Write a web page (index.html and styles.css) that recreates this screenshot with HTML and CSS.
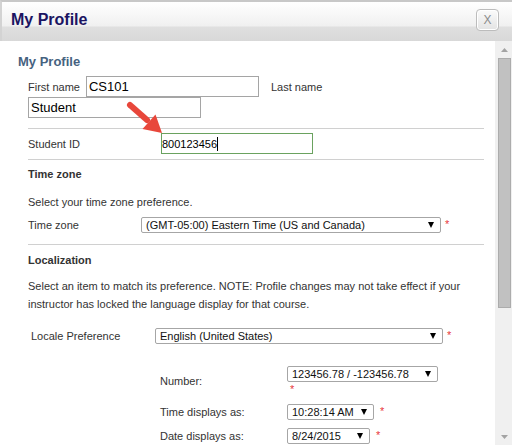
FILE: index.html
```html
<!DOCTYPE html>
<html lang="en">
<head>
<meta charset="utf-8">
<title>My Profile</title>
<link rel="stylesheet" href="styles.css">
</head>
<body>
<div class="dialog">
  <header class="dlg-head">
    <h1 class="dlg-title">My Profile</h1>
    <button class="dlg-close" type="button">X</button>
  </header>

  <div class="dlg-body">
    <main class="pane">
      <h2 class="page-title">My Profile</h2>

      <div class="names">
        <label class="lbl lbl-first">First name</label>
        <input class="txt" type="text" value="CS101">
        <label class="lbl lbl-last">Last name</label>
        <input class="txt" type="text" value="Student">
      </div>

      <hr class="rule">

      <div class="row row-id">
        <label class="lbl lbl-id">Student ID</label>
        <div class="txt txt-focus"><span>800123456</span><span class="caret"></span></div>
      </div>

      <hr class="rule rule-b">

      <h3 class="sec">Time zone</h3>
      <p class="note">Select your time zone preference.</p>
      <div class="row row-tz">
        <label class="lbl lbl-tz">Time zone</label>
        <div class="sel sel-tz"><span>(GMT-05:00) Eastern Time (US and Canada)</span><svg viewBox="0 0 6 6"><polygon points="0,0 6,0 3,6"/></svg></div>
        <span class="req">*</span>
      </div>

      <hr class="rule rule-c">

      <h3 class="sec sec-loc">Localization</h3>
      <p class="note note-loc">Select an item to match its preference. NOTE: Profile changes may not take effect if your instructor has locked the language display for that course.</p>

      <div class="row row-locale">
        <label class="lbl lbl-locale">Locale Preference</label>
        <div class="sel sel-locale"><span>English (United States)</span><svg viewBox="0 0 6 6"><polygon points="0,0 6,0 3,6"/></svg></div>
        <span class="req">*</span>
      </div>

      <div class="formats">
        <label class="lbl">Number:</label>
        <div class="fmt fmt-stack">
          <div class="sel sel-num"><span>123456.78 / -123456.78</span><svg viewBox="0 0 6 6"><polygon points="0,0 6,0 3,6"/></svg></div>
          <span class="req req-under">*</span>
        </div>

        <label class="lbl">Time displays as:</label>
        <div class="fmt">
          <div class="sel sel-time"><span>10:28:14 AM</span><svg viewBox="0 0 6 6"><polygon points="0,0 6,0 3,6"/></svg></div>
          <span class="req req-side">*</span>
        </div>

        <label class="lbl">Date displays as:</label>
        <div class="fmt">
          <div class="sel sel-date"><span>8/24/2015</span><svg viewBox="0 0 6 6"><polygon points="0,0 6,0 3,6"/></svg></div>
          <span class="req req-side">*</span>
        </div>
      </div>
    </main>

    <div class="sb">
      <div class="sb-btn"><svg viewBox="0 0 7 4"><polygon points="3.5,0 7,4 0,4"/></svg></div>
      <div class="sb-thumb"></div>
      <div class="sb-btn sb-down"><svg viewBox="0 0 7 4"><polygon points="0,0 7,0 3.5,4"/></svg></div>
    </div>
  </div>

  <svg class="callout" viewBox="124 98 44 40">
    <line x1="130" y1="105" x2="147" y2="120" stroke="#e8473b" stroke-width="6" stroke-linecap="round"/>
    <polygon points="162,133 155.5,114.5 142.5,129" fill="#e8473b"/>
  </svg>
</div>
</body>
</html>
```

FILE: styles.css
```css
* { box-sizing: border-box; }

html, body { margin: 0; padding: 0; }

body {
  width: 512px;
  height: 445px;
  overflow: hidden;
  background: #fff;
  font-family: "Liberation Sans", Arial, sans-serif;
  font-size: 11px;
  color: #333;
}

.dialog {
  position: relative;
  width: 512px;
  height: 445px;
  display: flex;
  flex-direction: column;
  overflow: hidden;
}

/* title bar */
.dlg-head {
  flex: none;
  height: 41px;
  display: flex;
  justify-content: space-between;
  align-items: flex-start;
  border-top: 2px solid #c8c8c8;
  border-left: 2px solid #d3d3d3;
  background: linear-gradient(#ffffff 0, #f0f0f0 24px, #dfdfdf 25px, #d8d8d8 100%);
}

.dlg-title {
  margin: 0;
  padding: 8px 0 0 9px;
  font-size: 16px;
  line-height: 19px;
  font-weight: bold;
  color: #1b1462;
}

.dlg-close {
  margin: 7px 13px 0 0;
  width: 23px;
  height: 22px;
  padding: 0;
  border: 1px solid #bcbcbc;
  border-radius: 4px;
  background: linear-gradient(#fbfbfb, #e3e3e3);
  box-shadow: inset 0 0 0 1px #fff;
  font: 12px/20px "Liberation Sans", Arial, sans-serif;
  color: #8c8c8c;
}

/* body + scroll area */
.dlg-body {
  flex: 1;
  min-height: 0;
  display: flex;
}

.pane {
  flex: 1;
  min-width: 0;
  padding: 0 11px 0 28px;
  overflow: hidden;
}

.page-title {
  margin: 13px 0 0 -10px;
  font-size: 13px;
  line-height: 16px;
  font-weight: bold;
  color: #46627f;
}

.lbl { color: #333; line-height: 14px; }

/* name fields */
.names {
  margin-top: 6px;
  display: flex;
  flex-wrap: wrap;
  align-items: center;
}

.lbl-first { margin-right: 6px; }
.lbl-last { margin-left: 12px; }

.txt {
  width: 173px;
  height: 21px;
  margin: 0;
  padding: 0 2px;
  border: 1px solid #a5a5a5;
  border-radius: 0;
  background: #fff;
  font: 13px "Liberation Sans", Arial, sans-serif;
  color: #000;
  outline: none;
}

.rule {
  margin: 10px 0 0;
  height: 0;
  border: 0;
  border-top: 1px solid #d0d0d0;
}
.rule-b { margin-top: 5px; }
.rule-c { margin-top: 11px; }

.row {
  display: flex;
  align-items: center;
}

.row-id { margin-top: 4px; }
.lbl-id { width: 133px; }

.txt-focus {
  width: 152px;
  padding: 0;
  display: flex;
  align-items: center;
  border-color: #6aa25f;
  font-size: 11px;
}

.caret {
  width: 1px;
  height: 14px;
  background: #000;
}

.sec {
  margin: 7px 0 0;
  font-size: 11px;
  line-height: 14px;
  font-weight: bold;
  color: #333;
}
.sec-loc { margin-top: 8px; }

.note {
  margin: 14px 0 0;
  line-height: 14px;
  color: #333;
}
.note-loc {
  margin-top: 10px;
  line-height: 18px;
}

.row-tz { margin-top: 8px; }
.lbl-tz { width: 113px; }

/* select boxes */
.sel {
  flex: none;
  height: 16px;
  padding: 0 6px 0 4px;
  display: flex;
  align-items: center;
  justify-content: space-between;
  border: 1px solid #a6a6a6;
  border-radius: 2px;
  background: #fff;
  color: #111;
  line-height: 14px;
  white-space: nowrap;
}

.sel svg {
  flex: none;
  width: 6px;
  height: 6px;
  fill: #000;
}

.sel-tz { width: 300px; }
.sel-locale { width: 288px; }
.sel-num { width: 151px; }
.sel-time { width: 87px; }
.sel-date { width: 83px; }

.req {
  align-self: flex-start;
  margin-left: 4px;
  line-height: 14px;
  color: #e8383d;
}

.row-locale {
  margin-top: 15px;
  padding-left: 3px;
}
.lbl-locale { width: 124px; }

/* number / time / date formats */
.formats {
  margin: 22px 0 0 132px;
  display: grid;
  grid-template-columns: 127px auto;
  row-gap: 8px;
  align-items: center;
}

.fmt {
  display: flex;
  align-items: flex-start;
}

.fmt-stack { flex-direction: column; }

.req-under { margin-left: 3px; }
.req-side { margin-left: 6px; }

/* scrollbar */
.sb {
  flex: none;
  width: 17px;
  display: flex;
  flex-direction: column;
  background: #f0f0f0;
}

.sb-btn {
  height: 17px;
  display: flex;
  align-items: center;
  justify-content: center;
  padding-left: 2px;
}

.sb-btn svg {
  width: 7px;
  height: 4px;
  fill: #a3a3a3;
}

.sb-thumb {
  width: 13px;
  height: 250px;
  margin-left: 3px;
  background: #c1c1c1;
  border: 1px solid #acacac;
}

.sb-down { margin-top: auto; }

/* annotation arrow over the Student ID field */
.callout {
  position: absolute;
  left: 124px;
  top: 98px;
  width: 44px;
  height: 40px;
  pointer-events: none;
}
```
